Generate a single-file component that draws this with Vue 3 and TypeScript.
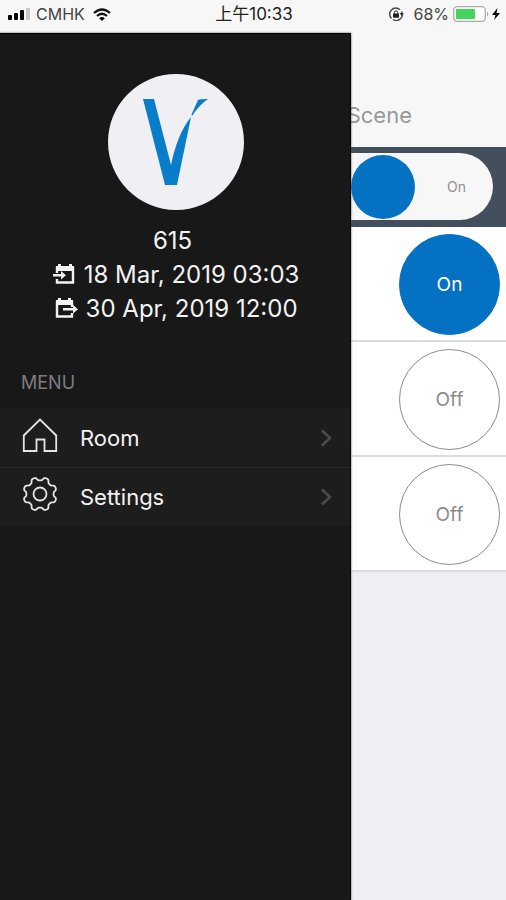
<script setup lang="ts">
import { ref } from 'vue'

interface Stay {
  kind: 'in' | 'out'
  text: string
}

const stays: Stay[] = [
  { kind: 'in', text: '18 Mar, 2019 03:03' },
  { kind: 'out', text: '30 Apr, 2019 12:00' },
]

const menu = [
  { id: 'room', label: 'Room' },
  { id: 'settings', label: 'Settings' },
]

const lights = ref([true, false, false])
const master = ref(true)

// Outline of a gear with eight rounded teeth, centred on 20,20
function gearPath(): string {
  const points: string[] = []
  for (let i = 0; i < 144; i++) {
    const a = (i / 144) * Math.PI * 2
    const wave = -Math.cos(8 * a)
    const r = 15.2 + 1.7 * Math.tanh(1.8 * wave)
    points.push(`${(20 + r * Math.cos(a)).toFixed(2)} ${(20 + r * Math.sin(a)).toFixed(2)}`)
  }
  return `M${points.join('L')}Z`
}
const gear = gearPath()
</script>

<template>
  <div class="screen">
    <header class="status">
      <div class="side">
        <svg class="signal" viewBox="0 0 22 12" aria-hidden="true">
          <rect x="0" y="7" width="4" height="5" rx="1" />
          <rect x="6" y="5" width="4" height="7" rx="1" />
          <rect x="12" y="2" width="4" height="10" rx="1" />
          <rect x="18" y="0" width="4" height="12" rx="1" fill="#c8c8c8" />
        </svg>
        <span class="carrier">CMHK</span>
        <svg class="wifi" viewBox="0 0 18 13" aria-hidden="true">
          <path d="M1 5Q9-2 17 5M4 8Q9 3.5 14 8" fill="none" stroke="#111" stroke-width="2.2" />
          <path d="M6.2 10.2Q9 7.8 11.8 10.2L9 13Z" />
        </svg>
      </div>
      <time class="clock">上午10:33</time>
      <div class="side end">
        <svg class="lock" viewBox="0 0 16 14" aria-hidden="true">
          <path d="M3.500 11.500A6 6 0 0 1 12 2.800M13.500 4.500A6 6 0 0 1 5 12.500" fill="none" stroke="#444" stroke-width="1.4" />
          <path d="M11.5 6H15.800L13.700 9Z" fill="#333" />
          <rect x="5" y="6.500" width="6" height="4.200" rx="0.6" fill="#222" />
          <path d="M6.300 7V5.600A1.700 1.700 0 0 1 9.700 5.600V7" fill="none" stroke="#222" />
        </svg>
        <span class="percent">68%</span>
        <svg class="battery" viewBox="0 0 37 16" aria-hidden="true">
          <rect x="0.7" y="0.7" width="31.6" height="14.6" rx="3.5" fill="#fff" stroke="#a9a9a9" stroke-width="1.3" />
          <rect x="3" y="3" width="19" height="10" rx="1" fill="#44d65c" />
          <path d="M34 5.5Q36.5 8 34 10.5Z" fill="#a9a9a9" />
        </svg>
        <svg class="bolt" viewBox="0 0 8 12" aria-hidden="true">
          <path d="M5.5 0L0 7H3.5L2.2 12L8 5H4.5Z" />
        </svg>
      </div>
    </header>

    <div class="body">
      <aside class="drawer">
        <section class="profile">
          <div class="avatar">
            <svg viewBox="0 0 136 136" role="img" aria-label="V logo">
              <path d="M35 25H46L63 91C67 72 73 55 83 43L69 111H57Z" fill="#087dca" />
              <path d="M84 42L83.500 40.500L90 26Q92 25 100 25Q91 31 84 42Z" fill="#087dca" />
            </svg>
          </div>
          <p class="number">615</p>
          <p v-for="stay in stays" :key="stay.kind" class="stay">
            <svg v-if="stay.kind === 'in'" viewBox="0 0 24 22" aria-hidden="true">
              <path d="M5 9V4H21V18.500H5V15" fill="none" stroke="#f2f2f2" stroke-width="2.400" />
              <path d="M4 2H22V7H4ZM6 0H9V4H6ZM17 0H20V4H17ZM1 10H9V7L14 11.300L9 15.600V12.600H1Z" fill="#f2f2f2" />
            </svg>
            <svg v-else viewBox="0 0 24 22" aria-hidden="true">
              <path d="M18 9V4H3V18.500H18V15" fill="none" stroke="#f2f2f2" stroke-width="2.400" />
              <path d="M2 2H19V7H2ZM4 0H7V4H4ZM14 0H17V4H14ZM9 10H19V7L24 11.300L19 15.600V12.600H9Z" fill="#f2f2f2" />
            </svg>
            <span>{{ stay.text }}</span>
          </p>
        </section>

        <h2 class="heading">MENU</h2>
        <nav class="menu" aria-label="Menu">
          <a v-for="item in menu" :key="item.id" class="item" :href="'#' + item.id">
            <svg class="glyph" viewBox="0 0 40 40" aria-hidden="true">
              <path v-if="item.id === 'room'" d="M3.800 36V20.500L20 4.500L36.200 20.500V36H24.500V24.500H16.500V36Z" />
              <template v-else>
                <path :d="gear" />
                <circle cx="20" cy="20" r="6.500" />
              </template>
            </svg>
            <span class="label">{{ item.label }}</span>
            <svg class="chevron" viewBox="0 0 12 18" aria-hidden="true">
              <path d="M2 1.500L10 9L2 16.500" />
            </svg>
          </a>
        </nav>
      </aside>

      <main class="pane">
        <div class="tabs"><a class="tab" href="#scene">Scene</a></div>
        <div class="master">
          <button class="pill" type="button" :aria-pressed="master" @click="master = !master">
            <span class="knob"></span>
            <span class="state">{{ master ? 'On' : 'Off' }}</span>
          </button>
        </div>
        <div v-for="(on, i) in lights" :key="i" class="row">
          <button class="round" :class="{ on }" type="button" :aria-pressed="on" @click="lights[i] = !on">
            {{ on ? 'On' : 'Off' }}
          </button>
        </div>
      </main>
    </div>
  </div>
</template>

<style>
body {
  margin: 0;
  background: #efeef3;
}
</style>

<style scoped>
.screen {
  display: flex;
  flex-direction: column;
  min-height: 100vh;
  font-family: Inter, "Noto Sans CJK TC", sans-serif;
}
.screen * {
  box-sizing: border-box;
}
.status {
  display: grid;
  grid-template-columns: 1fr auto 1fr;
  align-items: center;
  height: 33px;
  padding: 0 6px 5px 8px;
  background: #f7f7f7;
  color: #222;
  font-size: 16px;
}
.side {
  display: flex;
  align-items: center;
}
.end {
  justify-content: flex-end;
}
.clock {
  font-size: 17px;
  line-height: 20px;
}
.signal {
  width: 22px;
  height: 12px;
}
.carrier {
  margin: 0 8px 0 6px;
  color: #444;
}
.wifi {
  width: 18px;
  height: 13px;
}
.lock {
  width: 16px;
  height: 14px;
  margin-right: 9px;
}
.percent {
  margin-right: 4px;
  color: #444;
}
.battery {
  width: 37px;
  height: 16px;
}
.bolt {
  width: 8px;
  height: 12px;
  margin-left: 2px;
}
.body {
  display: grid;
  grid-template-columns: 69.4% 1fr;
  flex: 1;
}
.drawer {
  position: relative;
  z-index: 1;
  border-top: 1px solid #050505;
  border-right: 1px solid #050505;
  background: #181818;
  box-shadow: 0 0 2px #555;
}
.profile {
  display: flex;
  flex-direction: column;
  align-items: center;
  padding: 40px 0 0 1px;
  color: #f2f2f2;
  font-size: 24px;
  line-height: 34px;
}
.avatar {
  width: 136px;
  height: 136px;
  margin-bottom: 14px;
  border-radius: 50%;
  background: #efeff4;
}
.avatar svg {
  display: block;
}
.number,
.stay {
  margin: 0;
}
.number {
  padding-right: 6px;
}
.stay {
  display: flex;
  align-items: center;
  gap: 8px;
}
.stay svg {
  width: 24px;
  height: 22px;
}
.heading {
  margin: 0;
  padding: 45px 21px 13px;
  color: #7d7d80;
  font-size: 18px;
  font-weight: 400;
  line-height: 24px;
}
.menu {
  background: #1d1d1d;
}
.item {
  display: flex;
  align-items: center;
  height: 59px;
  padding: 0 18px 0 20px;
  color: #f2f2f2;
  font-size: 22px;
  text-decoration: none;
}
.item + .item {
  border-top: 1px solid #292929;
}
.glyph {
  width: 40px;
  height: 40px;
  margin-bottom: 6px;
  fill: none;
  stroke: #e4e4e4;
  stroke-width: 1.8;
}
.label {
  flex: 1;
  margin-left: 20px;
}
.chevron {
  width: 12px;
  height: 18px;
  fill: none;
  stroke: #4d4d4d;
  stroke-width: 2.4;
}
.pane {
  min-width: 0;
  overflow: hidden;
  background: #efeef3;
}
.tabs {
  display: flex;
  justify-content: flex-end;
  align-items: flex-end;
  height: 114px;
  padding: 0 94px 18px 0;
  background: #f7f7f7;
}
.tab {
  color: #98989a;
  font-size: 22px;
  font-weight: 400;
  line-height: 28px;
  text-decoration: none;
}
.master {
  display: flex;
  justify-content: flex-end;
  height: 80px;
  padding: 6px 13px 7px 0;
  background: #434f5c;
}
.pill {
  display: flex;
  flex-shrink: 0;
  align-items: center;
  width: 180px;
  padding: 0 27px 0 38px;
  border: 0;
  border-radius: 34px;
  background: #f7f7f7;
  color: #8e8e90;
  font-family: inherit;
  font-size: 14px;
}
.knob {
  width: 64px;
  height: 64px;
  border-radius: 50%;
  background: #0571c3;
}
.state {
  flex: 1;
  text-align: right;
}
.row {
  display: flex;
  justify-content: flex-end;
  height: 115px;
  padding: 7px 6px 0 0;
  border-bottom: 2px solid #dcdcdf;
  background: #fff;
}
.round {
  width: 101px;
  height: 101px;
  padding: 0;
  border: 1px solid #8b8b8b;
  border-radius: 50%;
  background: #fff;
  color: #8b8b8b;
  font-family: inherit;
  font-size: 19px;
}
.round.on {
  border-color: #0571c3;
  background: #0571c3;
  color: #fff;
}
</style>
